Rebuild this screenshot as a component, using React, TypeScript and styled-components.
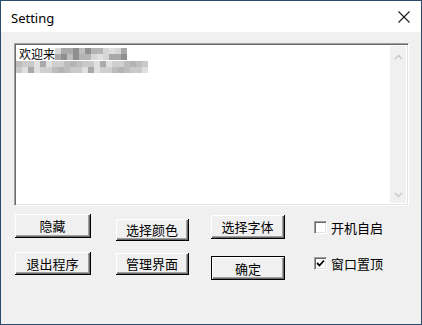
import React from "react";
import styled, { createGlobalStyle } from "styled-components";

const GlobalStyle = createGlobalStyle`
    html, body {
        margin: 0;
        padding: 0;
        background: #ffffff;
    }
`;

const cjk = `"Noto Sans CJK SC", "Noto Sans", sans-serif`;

// grey shades of the pixelated (censored) part of the welcome text
const shades = ["#c9c9c9", "#a9a9a9", "#bdbdbd", "#d6d6d6", "#9c9c9c", "#cfcfcf", "#b4b4b4", "#e0e0e0", "#8f8f8f", "#c2c2c2"];

function Mosaic(props: { cols: number; rows: number; seed: number }) {
    const cells = [];
    for (let i = 0; i < props.cols * props.rows; i++) {
        const c = shades[(i * 7 + props.seed * 3 + ((i * i) % 5)) % shades.length];
        cells.push(<Cell key={i} style={{ background: c }} />);
    }
    return <MosaicGrid $cols={props.cols}>{cells}</MosaicGrid>;
}

export default function App() {
    return (
        <>
            <GlobalStyle />
            <Window>
                <TitleBar>
                    <Title>Setting</Title>
                    <Close aria-label="close">
                        <svg width="12" height="12" viewBox="0 0 12 12">
                            <path d="M0.5 0.5 L11.5 11.5 M11.5 0.5 L0.5 11.5" stroke="#1a1a1a" strokeWidth="1.1" fill="none" />
                        </svg>
                    </Close>
                </TitleBar>
                <Body>
                    <TextBox>
                        <TextArea>
                            <Line>
                                <span>欢迎来</span>
                                <Mosaic cols={12} rows={2} seed={1} />
                            </Line>
                            <Line $indent={-3}>
                                <Mosaic cols={22} rows={2} seed={4} />
                            </Line>
                        </TextArea>
                        <ScrollBar>
                            <Arrow>
                                <svg width="9" height="6" viewBox="0 0 9 6">
                                    <path d="M1 5 L4.5 1.5 L8 5" stroke="#c8c8c8" strokeWidth="1.4" fill="none" />
                                </svg>
                            </Arrow>
                            <Arrow>
                                <svg width="9" height="6" viewBox="0 0 9 6">
                                    <path d="M1 1 L4.5 4.5 L8 1" stroke="#c8c8c8" strokeWidth="1.4" fill="none" />
                                </svg>
                            </Arrow>
                        </ScrollBar>
                    </TextBox>
                    <Controls>
                        <Column $left={1} $top={8} $gap={14} $width={76}>
                            <Button $h={24}>隐藏</Button>
                            <Button $h={23}>退出程序</Button>
                        </Column>
                        <Column $left={25} $top={13} $gap={12} $width={73}>
                            <Button $h={22}>选择颜色</Button>
                            <Button $h={22}>管理界面</Button>
                        </Column>
                        <Column $left={22} $top={9} $gap={17} $width={74}>
                            <Button $h={24}>选择字体</Button>
                            <Button $h={24} $default>确定</Button>
                        </Column>
                        <Column $left={29} $top={14} $gap={22} $width={90}>
                            <Check>
                                <Box />
                                开机自启
                            </Check>
                            <Check>
                                <Box>
                                    <svg width="9" height="9" viewBox="0 0 9 9">
                                        <path d="M1 4 L3.5 6.5 L8 1.5" stroke="#000" strokeWidth="1.8" fill="none" />
                                    </svg>
                                </Box>
                                窗口置顶
                            </Check>
                        </Column>
                    </Controls>
                </Body>
            </Window>
        </>
    );
}

const Window = styled.div`
    width: 422px;
    height: 325px;
    box-sizing: border-box;
    border: 1px solid #2c4a6e;
    display: flex;
    flex-direction: column;
    background: #f0f0f0;
`;

const TitleBar = styled.div`
    height: 31px;
    background: #ffffff;
    display: flex;
    align-items: center;
    justify-content: space-between;
    padding: 0 10px 0 10px;
`;

const Title = styled.div`
    font-family: "Noto Sans", "Open Sans", sans-serif;
    font-size: 13px;
    color: #000;
    margin-top: 2px;
`;

const Close = styled.div`
    width: 14px;
    height: 14px;
    display: flex;
    align-items: center;
    justify-content: center;
    margin-top: 1px;
`;

const Body = styled.div`
    flex: 1;
    padding: 11px 12px 0 13px;
    display: flex;
    flex-direction: column;
`;

const TextBox = styled.div`
    height: 163px;
    box-sizing: border-box;
    border-top: 1px solid #a0a0a0;
    border-left: 1px solid #a0a0a0;
    border-right: 1px solid #ffffff;
    border-bottom: 1px solid #ffffff;
    box-shadow: inset 1px 1px 0 #696969, inset -1px -1px 0 #e3e3e3;
    background: #ffffff;
    display: flex;
    padding: 2px 2px 2px 2px;
`;

const TextArea = styled.div`
    flex: 1;
    padding: 1px 0 0 2px;
    font-family: ${cjk};
    font-size: 12px;
    line-height: 13px;
    color: #000;
`;

const Line = styled.div<{ $indent?: number }>`
    display: flex;
    align-items: flex-start;
    white-space: nowrap;
    height: 13px;
    margin-left: ${(p) => p.$indent ?? 0}px;
`;

const MosaicGrid = styled.div<{ $cols: number }>`
    display: grid;
    grid-template-columns: repeat(${(p) => p.$cols}, 6px);
    grid-auto-rows: 6px;
    filter: blur(0.6px);
    margin-top: 1px;
`;

const Cell = styled.div`
    width: 6px;
    height: 6px;
`;

const ScrollBar = styled.div`
    width: 16px;
    background: #f0f0f0;
    display: flex;
    flex-direction: column;
    justify-content: space-between;
    align-items: center;
    padding: 7px 0 4px;
`;

const Arrow = styled.div`
    height: 8px;
    display: flex;
    align-items: center;
`;

const Controls = styled.div`
    display: flex;
    align-items: flex-start;
`;

const Column = styled.div<{ $left: number; $top: number; $gap: number; $width: number }>`
    display: flex;
    flex-direction: column;
    width: ${(p) => p.$width}px;
    margin-left: ${(p) => p.$left}px;
    padding-top: ${(p) => p.$top}px;
    gap: ${(p) => p.$gap}px;
`;

const Button = styled.button<{ $h: number; $default?: boolean }>`
    height: ${(p) => p.$h}px;
    width: 100%;
    box-sizing: border-box;
    padding: 0;
    margin: 0;
    background: #f0f0f0;
    font-family: ${cjk};
    font-size: 13px;
    color: #000;
    border: ${(p) => (p.$default ? "1px solid #000" : "none")};
    box-shadow: inset 1px 1px 0 #ffffff, inset -1px -1px 0 #696969, inset -2px -2px 0 #a0a0a0;
    ${(p) => (p.$default ? "" : "border-right: 1px solid #000; border-bottom: 1px solid #000;")}
`;

const Check = styled.label`
    display: flex;
    align-items: center;
    gap: 4px;
    font-family: ${cjk};
    font-size: 13px;
    color: #000;
    height: 14px;
`;

const Box = styled.span`
    width: 13px;
    height: 13px;
    box-sizing: border-box;
    background: #fff;
    border-top: 1px solid #a0a0a0;
    border-left: 1px solid #a0a0a0;
    border-right: 1px solid #fff;
    border-bottom: 1px solid #fff;
    box-shadow: inset 1px 1px 0 #696969, inset -1px -1px 0 #e3e3e3;
    display: flex;
    align-items: center;
    justify-content: center;
`;
